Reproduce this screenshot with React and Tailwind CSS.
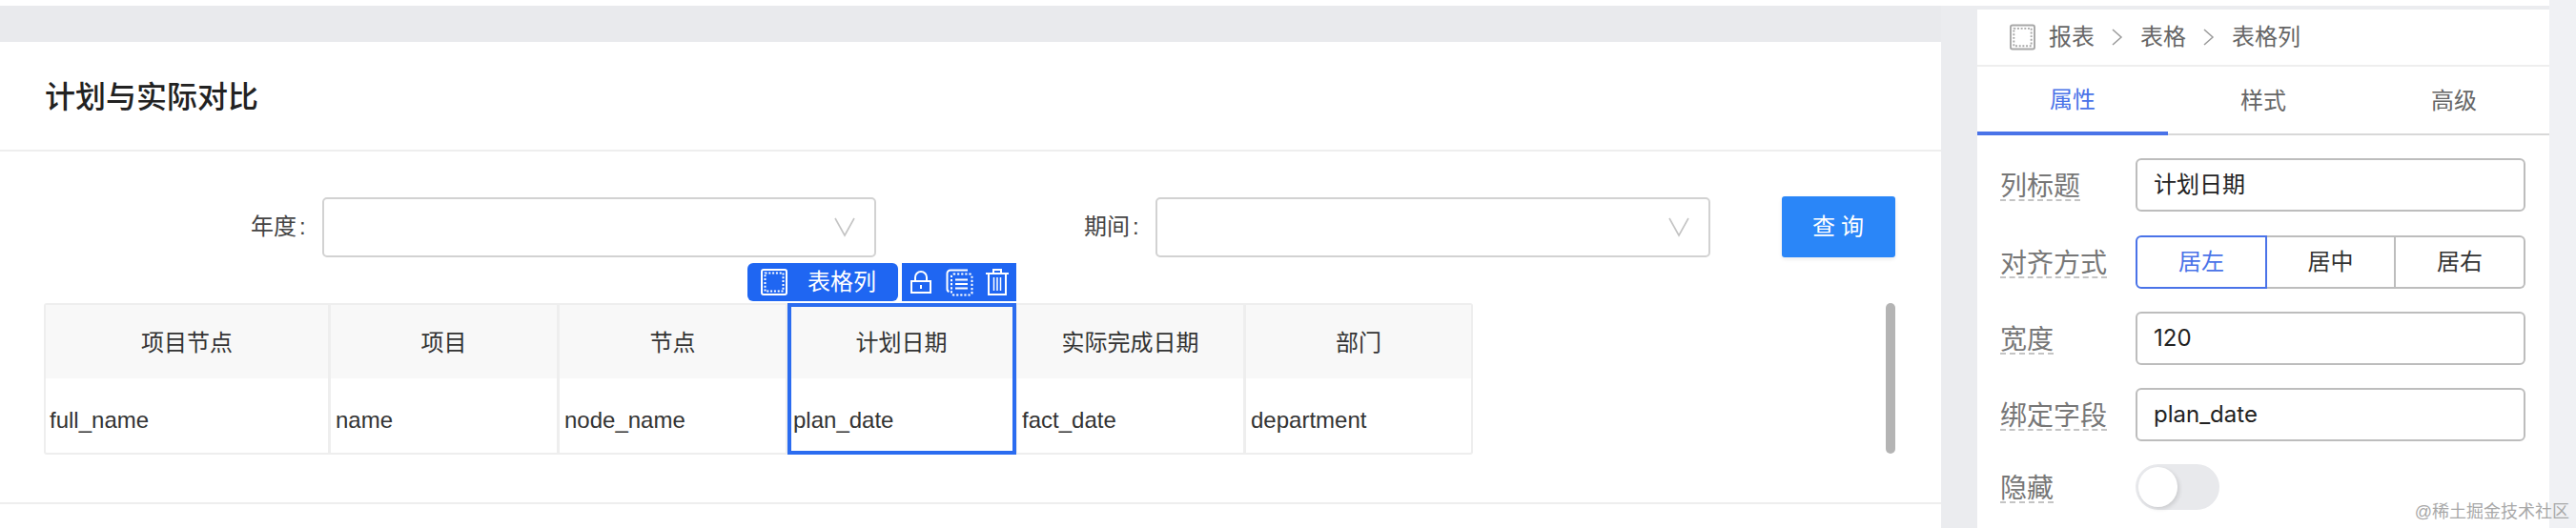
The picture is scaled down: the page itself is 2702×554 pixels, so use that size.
const CJK = "font-['Liberation_Sans','Noto_Sans_CJK_SC',sans-serif]";

function DottedBox({ className, color }) {
  return (
    <svg viewBox="0 0 28 28" className={className} fill="none">
      <rect x="1" y="1" width="26" height="26" rx="2" stroke={color} strokeWidth="2" />
      <rect x="4.5" y="4.5" width="19" height="19" stroke={color} strokeWidth="2" strokeDasharray="2 1.8" />
    </svg>
  );
}

function Select({ className }) {
  return (
    <div className={`h-[63px] border-2 border-[#d2d2d2] rounded-[5px] bg-white flex items-center justify-end pr-[20px] ${className}`}>
      <svg width="22" height="24" viewBox="0 0 22 24" fill="none" stroke="#c4c4c4" strokeWidth="1.6">
        <path d="M1 3 L11 21 L21 3" />
      </svg>
    </div>
  );
}

function Col({ title, field, width, pad }) {
  return (
    <div className={`flex flex-col ${width}`}>
      <div className="h-[77px] pt-[2px] bg-[#f8f8f8] flex items-center justify-center text-[24px] text-[#333]">{title}</div>
      <div className={`h-[78px] pt-[9px] flex items-center text-[24px] text-[#333] ${pad}`}>{field}</div>
    </div>
  );
}

function Label({ children }) {
  return (
    <div className="w-[142px] shrink-0 pt-[4px] text-[28px] text-[#777]">
      <span className="inline-block leading-[26px] border-b-2 border-dashed border-[#c4c4c4]">{children}</span>
    </div>
  );
}

function Field({ label, value, mt }) {
  return (
    <div className={`flex items-center ${mt}`}>
      <Label>{label}</Label>
      <div className="w-[409px] h-[56px] border-2 border-[#bdbdbd] rounded-[6px] flex items-center pl-[17px] text-[24px] text-[#222] font-['Inter','Noto_Sans_CJK_SC',sans-serif]">
        {value}
      </div>
    </div>
  );
}

function Chevron() {
  return (
    <svg width="12" height="20" viewBox="0 0 12 20" fill="none" stroke="#9a9a9a" strokeWidth="1.5" className="shrink-0">
      <path d="M1 2 L10 10 L1 18" />
    </svg>
  );
}

export default function App() {
  return (
    <div className={`relative w-[2702px] h-[554px] overflow-hidden flex bg-[#f0f1f4] ${CJK}`}>
      <div className="w-[2674px] shrink-0 flex flex-col">
        <div className="h-[6px] bg-white" />
        <div className="flex-1 flex min-h-0 bg-[#ebecef]">
          <div className="w-[2036px] shrink-0 flex flex-col bg-[#e9eaed]">
            <div className="h-[38px] shrink-0" />
            <div className="flex-1 bg-white flex flex-col">
              <div className="h-[115px] pt-[3px] shrink-0 border-b-2 border-[#eeeeee] flex items-center pl-[47px] text-[32px] font-medium text-[#222]">
                计划与实际对比
              </div>

              <div className="flex items-center mt-[47px] pr-[48px]">
                <span className="w-[263px] shrink-0" />
                <span className="w-[75px] shrink-0 text-[24px] text-[#444]">年度<span className="ml-[3px]">:</span></span>
                <Select className="w-[581px] shrink-0" />
                <span className="w-[218px] shrink-0" />
                <span className="w-[75px] shrink-0 text-[24px] text-[#444]">期间<span className="ml-[3px]">:</span></span>
                <Select className="w-[582px] shrink-0" />
                <span className="flex-1" />
                <button className="w-[119px] h-[64px] pl-[5px] bg-[#2a86f8] rounded-[3px] text-white text-[24px] tracking-[6px] shadow-[0_2px_4px_rgba(0,0,0,0.08)]">
                  查询
                </button>
              </div>

              <div className="relative mt-[48px] ml-[46px] mr-[48px] h-[159px] flex justify-between">
                <div className="w-[1499px] h-[159px] border-2 border-[#eeeeee] rounded-[3px] flex divide-x-[3px] divide-[#eeeeee]">
                  <Col title="项目节点" field="full_name" width="w-[299px]" pad="pl-[4px]" />
                  <Col title="项目" field="name" width="w-[240px]" pad="pl-[5px]" />
                  <Col title="节点" field="node_name" width="w-[240px]" pad="pl-[5px]" />
                  <Col title="计划日期" field="plan_date" width="w-[240px]" pad="pl-[5px]" />
                  <Col title="实际完成日期" field="fact_date" width="w-[240px]" pad="pl-[5px]" />
                  <Col title="部门" field="department" width="flex-1" pad="pl-[5px]" />
                </div>
                <div className="w-[10px] h-[158px] rounded-[5px] bg-[#b4b4b4]" />

                <div className="absolute left-[780px] top-0 w-[240px] h-[159px] border-4 border-[#2b6cf0]" />
                <div className="absolute left-[738px] top-[-42px] w-[158px] h-[40px] bg-[#1f66f2] rounded-[6px] flex items-center text-white text-[24px] pl-[14px]">
                  <DottedBox className="w-[28px] h-[28px] shrink-0" color="#fff" />
                  <span className="ml-[21px]">表格列</span>
                </div>
                <div className="absolute left-[900px] top-[-42px] w-[120px] h-[40px] bg-[#1f66f2] flex items-center pl-[9px]">
                  <svg width="22" height="24" viewBox="0 0 22 24" fill="none" stroke="#fff" strokeWidth="2">
                    <rect x="1" y="11" width="20" height="12" />
                    <path d="M5 11 V7 a6 6 0 0 1 12 0 V11" />
                    <path d="M11 15 v4" />
                  </svg>
                  <svg width="29" height="29" viewBox="0 0 29 29" fill="none" stroke="#fff" strokeWidth="2" className="ml-[15px]">
                    <path d="M23 1.5 H5 a3.5 3.5 0 0 0 -3.5 3.5 V21 a3 3 0 0 0 2 3" />
                    <rect x="6" y="5.5" width="21.5" height="22" rx="2" strokeDasharray="2.2 1.9" />
                    <path d="M10 11.5 H23 M10 16 H23 M10 20.5 H23" />
                  </svg>
                  <svg width="24" height="28" viewBox="0 0 24 28" fill="none" stroke="#fff" strokeWidth="2" className="ml-[13px]">
                    <path d="M0 5 H24 M8 4 V1 H16 V4" />
                    <path d="M3 5 V27 H21 V5" />
                    <path d="M8.5 9 V23 M12 9 V23 M15.5 9 V23" strokeWidth="1.5" />
                  </svg>
                </div>
              </div>

              <div className="mt-[50px] h-[2px] bg-[#eeeeee]" />
            </div>
          </div>

          <div className="w-[38px] shrink-0" />

          <div className="flex-1 mt-[4px] bg-white flex flex-col">
            <div className="h-[58px] shrink-0 border-b-2 border-[#eeeeee] box-content flex items-center pl-[34px] text-[24px] text-[#666]">
              <DottedBox className="w-[27px] h-[28px] shrink-0" color="#a8a8a8" />
              <span className="ml-[14px]">报表</span>
              <span className="ml-[18px]"><Chevron /></span>
              <span className="ml-[18px]">表格</span>
              <span className="ml-[18px]"><Chevron /></span>
              <span className="ml-[18px]">表格列</span>
            </div>
            <div className="h-[72px] shrink-0 flex border-b-2 border-[#d8d8d8] text-[24px] text-[#666]">
              <div className="w-[200px] h-[72px] pt-[2px] border-b-4 border-[#4a73e8] text-[#4a73e8] flex items-center justify-center">属性</div>
              <div className="w-[200px] pt-[2px] flex items-center justify-center">样式</div>
              <div className="w-[200px] pt-[2px] flex items-center justify-center">高级</div>
            </div>
            <div className="pl-[24px] flex flex-col">
              <Field label="列标题" value="计划日期" mt="mt-[24px]" />
              <div className="flex items-center mt-[25px]">
                <Label>对齐方式</Label>
                <div className="w-[409px] h-[56px] flex text-[24px] text-[#333]">
                  <div className="w-[138px] border-2 border-[#4a73e8] rounded-l-[6px] text-[#4a73e8] flex items-center justify-center">居左</div>
                  <div className="w-[135px] border-y-2 border-r-2 border-[#bdbdbd] flex items-center justify-center">居中</div>
                  <div className="flex-1 border-y-2 border-r-2 border-[#bdbdbd] rounded-r-[6px] flex items-center justify-center">居右</div>
                </div>
              </div>
              <Field label="宽度" value="120" mt="mt-[24px]" />
              <Field label="绑定字段" value="plan_date" mt="mt-[24px]" />
              <div className="flex items-center mt-[24px]">
                <Label>隐藏</Label>
                <div className="w-[88px] h-[48px] rounded-full bg-[#e8e9ec] flex items-center pl-[3px]">
                  <div className="w-[41px] h-[42px] rounded-full bg-white shadow-[2px_2px_4px_rgba(0,0,0,0.12)]" />
                </div>
              </div>
            </div>
          </div>
        </div>
      </div>
      <div className="absolute right-[7px] bottom-[4px] whitespace-nowrap leading-[26px] text-[18px] text-[#a8a8a8]">@稀土掘金技术社区</div>
    </div>
  );
}
